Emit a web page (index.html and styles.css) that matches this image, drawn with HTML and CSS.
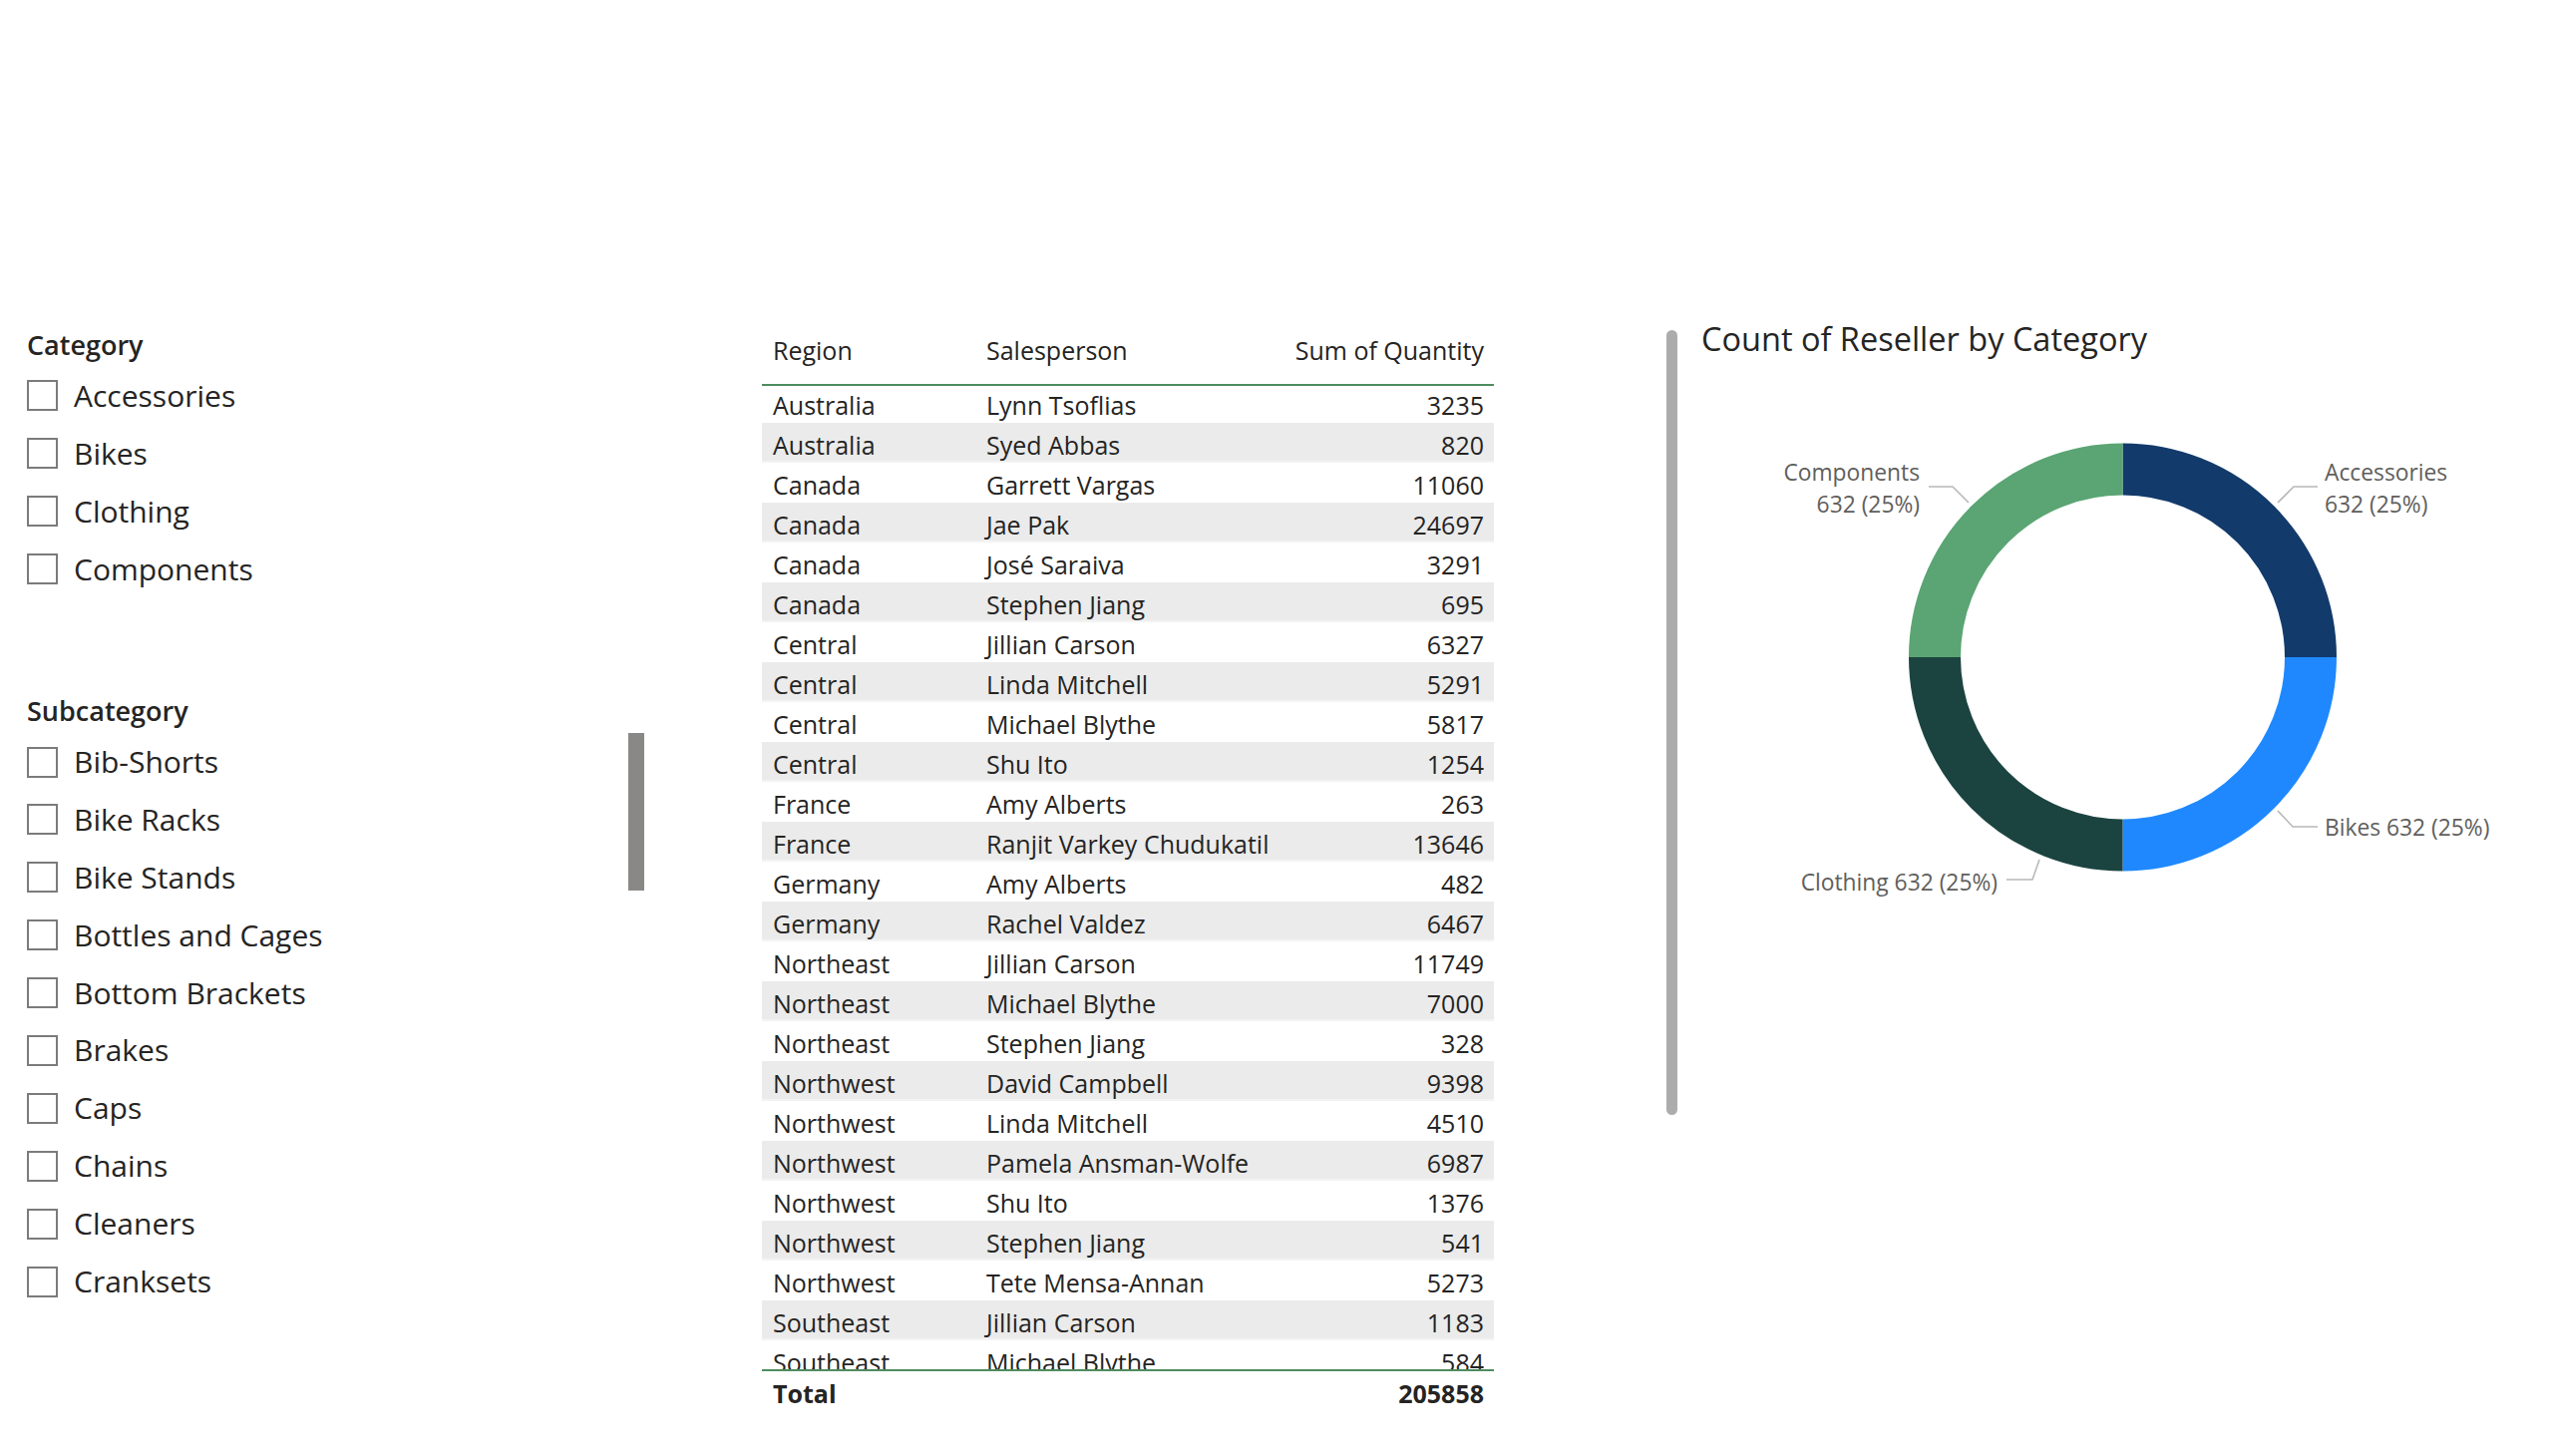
FILE: index.html
```html
<!DOCTYPE html>
<html lang="en">
<head>
<meta charset="utf-8">
<title>Report</title>
<link rel="stylesheet" href="styles.css">
</head>
<body>
<div class="page">
  <div class="slicers">
    <section class="slicer">
      <h2 class="slicer-title">Category</h2>
      <ul class="slicer-list">
        <li class="slicer-item"><span class="box"></span><span>Accessories</span></li>
        <li class="slicer-item"><span class="box"></span><span>Bikes</span></li>
        <li class="slicer-item"><span class="box"></span><span>Clothing</span></li>
        <li class="slicer-item"><span class="box"></span><span>Components</span></li>
      </ul>
    </section>
    <section class="slicer slicer-sub">
      <h2 class="slicer-title">Subcategory</h2>
      <div class="slicer-body">
        <ul class="slicer-list">
          <li class="slicer-item"><span class="box"></span><span>Bib-Shorts</span></li>
          <li class="slicer-item"><span class="box"></span><span>Bike Racks</span></li>
          <li class="slicer-item"><span class="box"></span><span>Bike Stands</span></li>
          <li class="slicer-item"><span class="box"></span><span>Bottles and Cages</span></li>
          <li class="slicer-item"><span class="box"></span><span>Bottom Brackets</span></li>
          <li class="slicer-item"><span class="box"></span><span>Brakes</span></li>
          <li class="slicer-item"><span class="box"></span><span>Caps</span></li>
          <li class="slicer-item"><span class="box"></span><span>Chains</span></li>
          <li class="slicer-item"><span class="box"></span><span>Cleaners</span></li>
          <li class="slicer-item"><span class="box"></span><span>Cranksets</span></li>
        </ul>
        <div class="scroll-track"><div class="scroll-thumb"></div></div>
      </div>
    </section>
  </div>

  <div class="table">
    <div class="thead">
      <div class="c">Region</div>
      <div class="c">Salesperson</div>
      <div class="c num">Sum of Quantity</div>
    </div>
    <div class="tbody">
      <div class="row"><div class="c">Australia</div><div class="c">Lynn Tsoflias</div><div class="c num">3235</div></div>
      <div class="row"><div class="c">Australia</div><div class="c">Syed Abbas</div><div class="c num">820</div></div>
      <div class="row"><div class="c">Canada</div><div class="c">Garrett Vargas</div><div class="c num">11060</div></div>
      <div class="row"><div class="c">Canada</div><div class="c">Jae Pak</div><div class="c num">24697</div></div>
      <div class="row"><div class="c">Canada</div><div class="c">José Saraiva</div><div class="c num">3291</div></div>
      <div class="row"><div class="c">Canada</div><div class="c">Stephen Jiang</div><div class="c num">695</div></div>
      <div class="row"><div class="c">Central</div><div class="c">Jillian Carson</div><div class="c num">6327</div></div>
      <div class="row"><div class="c">Central</div><div class="c">Linda Mitchell</div><div class="c num">5291</div></div>
      <div class="row"><div class="c">Central</div><div class="c">Michael Blythe</div><div class="c num">5817</div></div>
      <div class="row"><div class="c">Central</div><div class="c">Shu Ito</div><div class="c num">1254</div></div>
      <div class="row"><div class="c">France</div><div class="c">Amy Alberts</div><div class="c num">263</div></div>
      <div class="row"><div class="c">France</div><div class="c">Ranjit Varkey Chudukatil</div><div class="c num">13646</div></div>
      <div class="row"><div class="c">Germany</div><div class="c">Amy Alberts</div><div class="c num">482</div></div>
      <div class="row"><div class="c">Germany</div><div class="c">Rachel Valdez</div><div class="c num">6467</div></div>
      <div class="row"><div class="c">Northeast</div><div class="c">Jillian Carson</div><div class="c num">11749</div></div>
      <div class="row"><div class="c">Northeast</div><div class="c">Michael Blythe</div><div class="c num">7000</div></div>
      <div class="row"><div class="c">Northeast</div><div class="c">Stephen Jiang</div><div class="c num">328</div></div>
      <div class="row"><div class="c">Northwest</div><div class="c">David Campbell</div><div class="c num">9398</div></div>
      <div class="row"><div class="c">Northwest</div><div class="c">Linda Mitchell</div><div class="c num">4510</div></div>
      <div class="row"><div class="c">Northwest</div><div class="c">Pamela Ansman-Wolfe</div><div class="c num">6987</div></div>
      <div class="row"><div class="c">Northwest</div><div class="c">Shu Ito</div><div class="c num">1376</div></div>
      <div class="row"><div class="c">Northwest</div><div class="c">Stephen Jiang</div><div class="c num">541</div></div>
      <div class="row"><div class="c">Northwest</div><div class="c">Tete Mensa-Annan</div><div class="c num">5273</div></div>
      <div class="row"><div class="c">Southeast</div><div class="c">Jillian Carson</div><div class="c num">1183</div></div>
      <div class="row"><div class="c">Southeast</div><div class="c">Michael Blythe</div><div class="c num">584</div></div>
    </div>
    <div class="tfoot">
      <div class="c">Total</div>
      <div class="c"></div>
      <div class="c num">205858</div>
    </div>
  </div>

  <div class="chart">
    <div class="chart-bar"></div>
    <div class="chart-body">
      <h2 class="chart-title">Count of Reseller by Category</h2>
      <svg class="donut" width="854" height="600" viewBox="0 0 854 600">
        <g fill="none" stroke-width="52">
          <path d="M422.5 100.5 A188.5 188.5 0 0 1 611 289" stroke="#123a6b"/>
          <path d="M611 289 A188.5 188.5 0 0 1 422.5 477.5" stroke="#1f88ff"/>
          <path d="M422.5 477.5 A188.5 188.5 0 0 1 234 289" stroke="#1b4440"/>
          <path d="M234 289 A188.5 188.5 0 0 1 422.5 100.5" stroke="#5aa573"/>
        </g>
        <g fill="none" stroke="#b8b8b8" stroke-width="1.6">
          <polyline points="228,118 252,118 268,134"/>
          <polyline points="618,118 594,118 578,134"/>
          <polyline points="578,443 593,459 618,459"/>
          <polyline points="339,492 332,512 306,512"/>
        </g>
        <g class="lbl">
          <text x="219" y="112" text-anchor="end">Components</text>
          <text x="219" y="144" text-anchor="end">632 (25%)</text>
          <text x="625" y="112">Accessories</text>
          <text x="625" y="144">632 (25%)</text>
          <text x="625" y="468">Bikes 632 (25%)</text>
          <text x="297" y="523" text-anchor="end">Clothing 632 (25%)</text>
        </g>
      </svg>
    </div>
  </div>
</div>
</body>
</html>
```

FILE: styles.css
```css
* { box-sizing: border-box; }
html, body { margin: 0; padding: 0; background: #ffffff; }
body {
  width: 2560px;
  height: 1460px;
  overflow: hidden;
  font-family: "Open Sans", "Noto Sans", sans-serif;
  color: #252423;
}
.page {
  display: flex;
  align-items: flex-start;
}

/* Slicers */
.slicers {
  margin-left: 27px;
  margin-top: 328px;
  width: 619px;
  display: flex;
  flex-direction: column;
}
.slicer-sub { margin-top: 95.5px; }
.slicer-title {
  margin: 0 0 4px 0;
  font-size: 27px;
  line-height: 36px;
  font-weight: 600;
  color: #252423;
}
.slicer-list {
  list-style: none;
  margin: 0;
  padding: 0;
  flex: 1;
}
.slicer-item {
  height: 57.9px;
  display: flex;
  align-items: center;
  gap: 16px;
  font-size: 30px;
  line-height: 58px;
  color: #252423;
  white-space: nowrap;
}
.box {
  width: 31px;
  height: 31px;
  flex: none;
  border: 2px solid #7b7b7b;
  background: #fff;
}
.slicer-body {
  display: flex;
  align-items: flex-start;
}
.scroll-track {
  width: 16px;
  flex: none;
}
.scroll-thumb {
  width: 16px;
  height: 158px;
  background: #8a8886;
}

/* Table */
.table {
  margin-left: 118px;
  margin-top: 331px;
  width: 734px;
  font-size: 25px;
  color: #252423;
}
.thead, .row, .tfoot {
  display: grid;
  grid-template-columns: 214px 1fr 220px;
}
.thead {
  line-height: 40px;
  padding-bottom: 14px;
  border-bottom: 2px solid #4e8c5f;
}
.tbody {
  margin-top: -3px;
  height: 989px;
  overflow: hidden;
}
.row {
  height: 40px;
  padding-top: 4px;
  line-height: 36px;
}
.row:nth-child(even) {
  background: #ebebeb;
  box-shadow: inset 0 -2px 0 #f3f3f3;
}
.c {
  padding-left: 11px;
  white-space: nowrap;
}
.num {
  text-align: right;
  padding-left: 0;
  padding-right: 10px;
}
.tfoot {
  border-top: 2px solid #4e8c5f;
  padding-top: 2px;
  line-height: 40px;
  font-weight: 700;
}

/* Chart */
.chart {
  margin-left: 173px;
  margin-top: 320px;
  display: flex;
  align-items: flex-start;
  flex: 1;
}
.chart-bar {
  width: 11px;
  height: 787px;
  margin-top: 11px;
  border-radius: 6px;
  background: #acacac;
  flex: none;
}
.chart-body {
  margin-left: 24px;
  display: flex;
  flex-direction: column;
}
.chart-title {
  margin: 0;
  font-size: 32.5px;
  line-height: 40px;
  font-weight: 500;
  color: #252423;
}
.donut {
  display: block;
  margin-top: 10px;
}
.lbl text {
  font-family: "Open Sans", "Noto Sans", sans-serif;
  font-size: 22.8px;
  fill: #605e5c;
}
```
